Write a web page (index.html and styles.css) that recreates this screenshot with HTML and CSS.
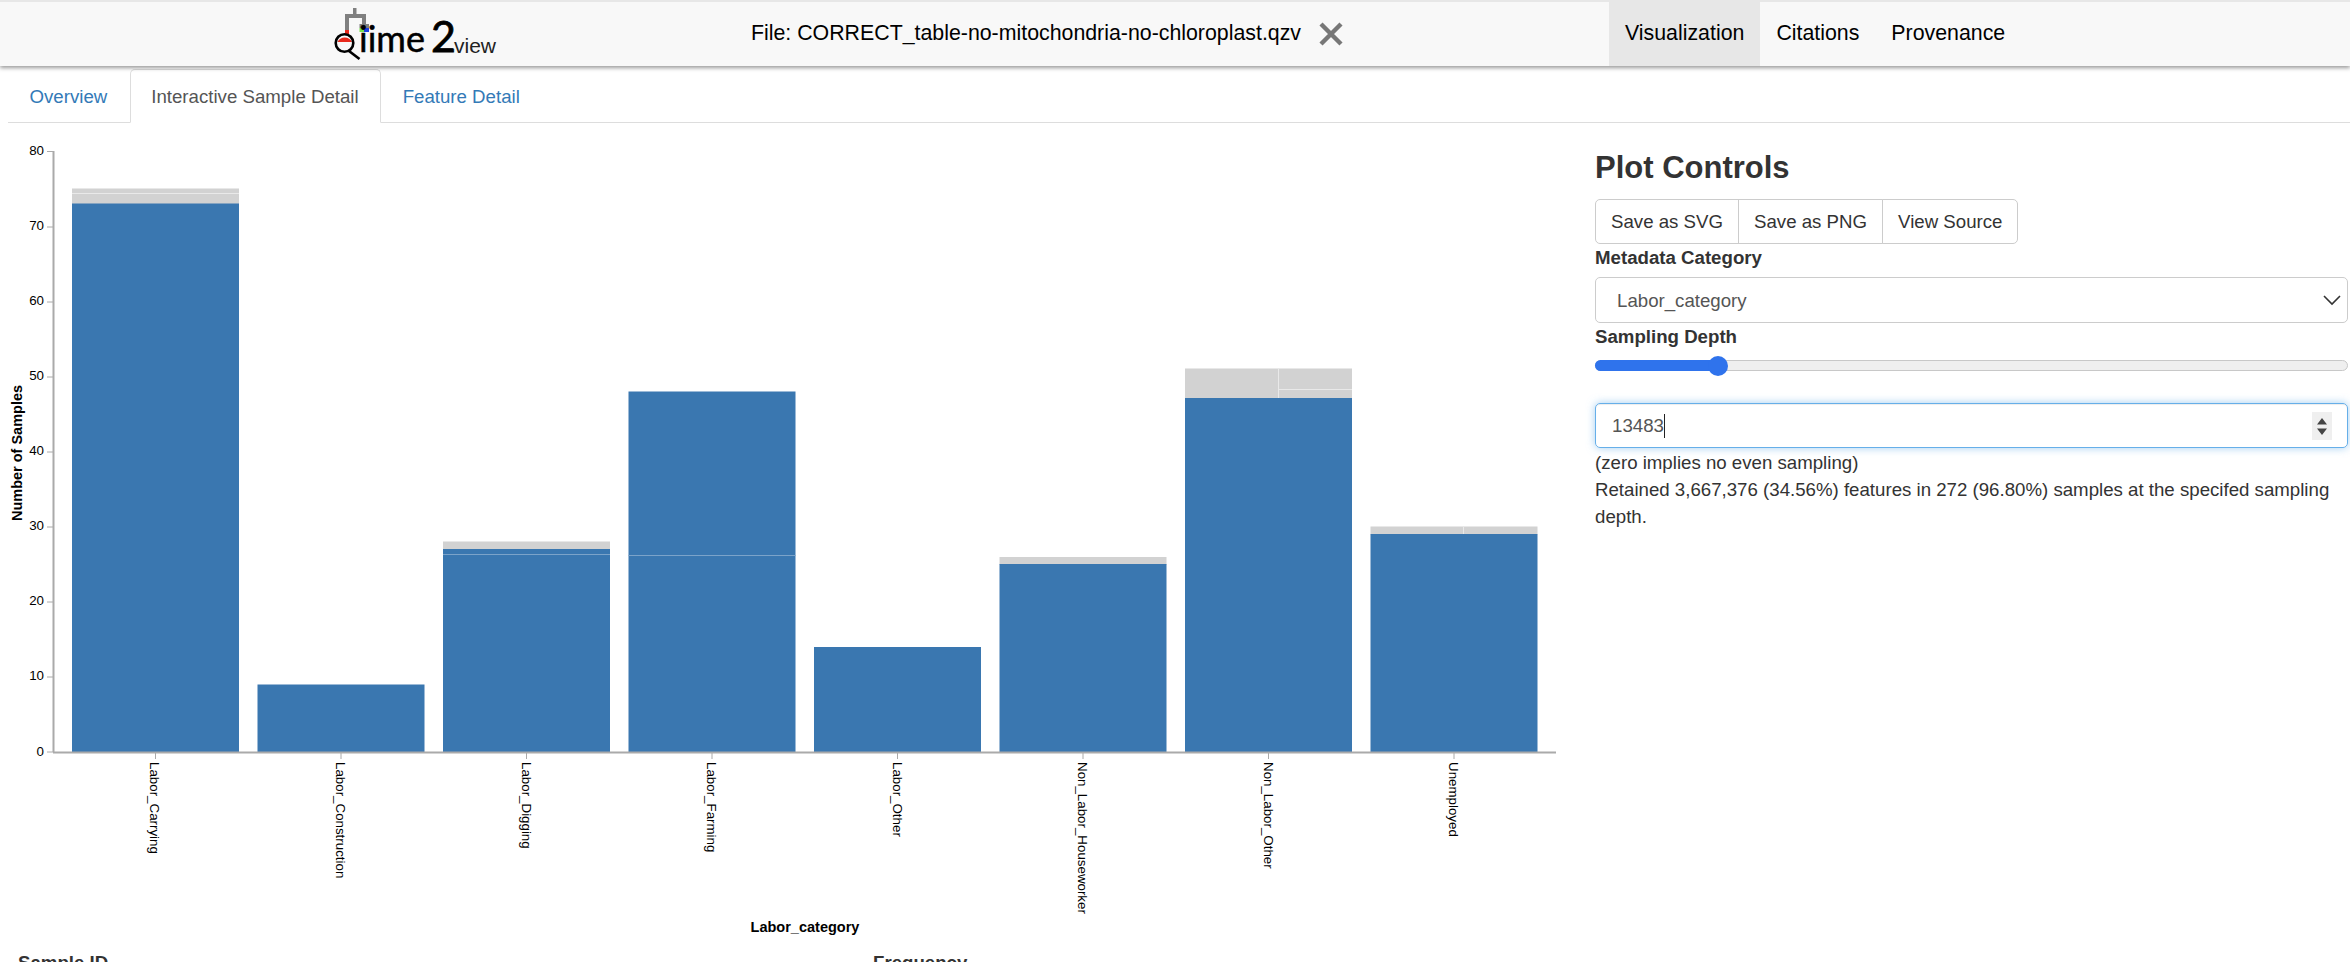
FILE: index.html
```html
<!DOCTYPE html>
<html lang="en">
<head>
    <meta charset="UTF-8">
    <meta name="viewport" content="width=device-width, initial-scale=1.0">
    <title>QIIME 2 View</title>
    <link rel="stylesheet" href="styles.css">
</head>
<body>

    <header class="topbar">
        <svg class="logo" width="190" height="64" viewBox="320 2 190 64" role="img" aria-label="qiime2 view">
            <rect x="353" y="8" width="3.5" height="7" fill="#808080"/>
            <rect x="345" y="14" width="21" height="4" fill="#808080"/>
            <rect x="345" y="14" width="4" height="16" fill="#808080"/>
            <rect x="362" y="14" width="4" height="11" fill="#808080"/>
            <rect x="359.5" y="24" width="9.5" height="4" fill="#808080"/>
            <rect x="345" y="30" width="4" height="4" fill="#e8291c"/>
            <rect x="359.5" y="28" width="4.5" height="4" fill="#76e04c"/>
            <rect x="364" y="28" width="5" height="4" fill="#1c3ee0"/>
            <path d="M337.5 42 a8 8 0 0 1 14.5 0 z" fill="#e8291c"/>
            <circle cx="344.5" cy="43" r="8.8" fill="none" stroke="#000" stroke-width="2.6"/>
            <line x1="349" y1="51" x2="359.5" y2="59" stroke="#000" stroke-width="2.6"/>
            <text class="logo-main" x="359" y="52">iime</text>
            <text class="logo-two" x="431" y="52">2</text>
            <text class="logo-view" x="454" y="53">view</text>
        </svg>
        <div class="file-name">File: CORRECT_table-no-mitochondria-no-chloroplast.qzv</div>
        <svg class="close-icon" width="26" height="24" viewBox="0 0 26 24">
            <path d="M3 2 L23 22 M23 2 L3 22" stroke="#777" stroke-width="4.4" fill="none"/>
        </svg>
        <nav class="main-nav">
            <a class="active">Visualization</a>
            <a>Citations</a>
            <a>Provenance</a>
        </nav>
    </header>

    <ul class="tabs">
        <li><a>Overview</a></li>
        <li class="active"><a>Interactive Sample Detail</a></li>
        <li><a>Feature Detail</a></li>
    </ul>

    <main class="content">
        <section class="plot-column">
            <svg class="chart" width="1590" height="810" viewBox="0 130 1590 810">
                <!-- bars: 7.5125px per sample, zero at y=752 -->
                <g fill="#d2d2d2">
                    <rect x="72" y="188.5" width="167" height="16"/>
                    <rect x="443" y="541.5" width="167" height="10"/>
                    <rect x="999.5" y="557" width="167" height="8"/>
                    <rect x="1185" y="368.5" width="167" height="30"/>
                    <rect x="1370.5" y="526.5" width="167" height="8"/>
                </g>
                <g fill="#3a77b0">
                    <rect x="72" y="203.5" width="167" height="548.5"/>
                    <rect x="257.5" y="684.5" width="167" height="67.5"/>
                    <rect x="443" y="549" width="167" height="203"/>
                    <rect x="628.5" y="391.5" width="167" height="360.5"/>
                    <rect x="814" y="647" width="167" height="105"/>
                    <rect x="999.5" y="564" width="167" height="188"/>
                    <rect x="1185" y="398" width="167" height="354"/>
                    <rect x="1370.5" y="534" width="167" height="218"/>
                </g>
                <g stroke="#e9e9e9" stroke-width="1" fill="none">
                    <path d="M72 193.5 H239"/>
                    <path d="M1278.5 368.5 V398 M1278.5 389.5 H1352"/>
                    <path d="M1463.5 526.5 V534"/>
                </g>
                <g stroke="#7ba3c9" stroke-width="1" fill="none">
                    <path d="M443 554.5 H610"/>
                    <path d="M628.5 555.5 H795.5"/>
                </g>

                <!-- y axis -->
                <g stroke="#aaa" fill="none">
                    <path d="M53.5 151 V752" stroke-width="2"/>
                    <path d="M47 151.5 H54 M47 227 H54 M47 302 H54 M47 377 H54 M47 452 H54 M47 527 H54 M47 602 H54 M47 677 H54 M47 752 H54"/>
                </g>
                <g class="tick-label" text-anchor="end">
                    <text x="44" y="155">80</text>
                    <text x="44" y="230">70</text>
                    <text x="44" y="305">60</text>
                    <text x="44" y="380">50</text>
                    <text x="44" y="455">40</text>
                    <text x="44" y="530">30</text>
                    <text x="44" y="605">20</text>
                    <text x="44" y="680">10</text>
                    <text x="44" y="756">0</text>
                </g>
                <text class="axis-title" text-anchor="middle" transform="translate(22 453) rotate(-90)">Number of Samples</text>

                <!-- x axis -->
                <g stroke="#aaa" fill="none">
                    <path d="M53 752.5 H1556" stroke-width="2"/>
                    <path d="M155.5 752 V759 M341 752 V759 M526.5 752 V759 M712 752 V759 M897.5 752 V759 M1083 752 V759 M1268.5 752 V759 M1454 752 V759"/>
                </g>
                <g class="tick-label">
                    <text transform="translate(150 762) rotate(90)">Labor_Carrying</text>
                    <text transform="translate(336 762) rotate(90)">Labor_Construction</text>
                    <text transform="translate(521.5 762) rotate(90)">Labor_Digging</text>
                    <text transform="translate(707 762) rotate(90)">Labor_Farming</text>
                    <text transform="translate(892.5 762) rotate(90)">Labor_Other</text>
                    <text transform="translate(1078 762) rotate(90)">Non_Labor_Houseworker</text>
                    <text transform="translate(1263.5 762) rotate(90)">Non_Labor_Other</text>
                    <text transform="translate(1449 762) rotate(90)">Unemployed</text>
                </g>
                <text class="axis-title" x="805" y="932" text-anchor="middle">Labor_category</text>
            </svg>
            <div class="sample-head">
                <strong class="sample-id">Sample ID</strong>
                <strong>Frequency</strong>
            </div>
        </section>

        <aside class="controls">
            <h3>Plot Controls</h3>
            <div class="btn-group">
                <button>Save as SVG</button>
                <button>Save as PNG</button>
                <button>View Source</button>
            </div>
            <label>Metadata Category</label>
            <div class="select-box">
                <span>Labor_category</span>
                <svg width="20" height="12" viewBox="0 0 20 12">
                    <path d="M2 2 L10 10 L18 2" stroke="#333" stroke-width="1.6" fill="none"/>
                </svg>
            </div>
            <label>Sampling Depth</label>
            <div class="slider">
                <div class="slider-fill"></div>
                <div class="slider-thumb"></div>
            </div>
            <div class="number-box">
                <span class="number-value">13483</span>
                <span class="stepper">
                    <svg width="12" height="24" viewBox="0 0 12 24">
                        <path d="M6 4 L11 10.5 H1 Z M6 21 L11 14.5 H1 Z" fill="#444"/>
                    </svg>
                </span>
            </div>
            <p class="depth-note">(zero implies no even sampling)</p>
            <p>Retained 3,667,376 (34.56%) features in 272 (96.80%) samples at the specifed sampling depth.</p>
        </aside>
    </main>

</body>
</html>
```

FILE: styles.css
```css
html, body {
    height: 962px;
    overflow: hidden;
}

body {
    font-family: "Liberation Sans", Arial, sans-serif;
    font-size: 18.67px;
    line-height: 27px;
    color: #333;
    background-color: #fff;
    margin: 0;
    padding: 0;
}

.topbar {
    display: flex;
    align-items: center;
    box-sizing: border-box;
    height: 66px;
    padding-left: 320px;
    font-size: 21.33px;
    background-color: #f8f8f8;
    border-top: 2px solid #e7e7e7;
    box-shadow: 0 2px 4px rgba(0, 0, 0, 0.4);
    position: relative;
}

.logo {
    display: block;
    flex: none;
}

.logo-main {
    font-family: Lato, "Liberation Sans", sans-serif;
    font-size: 36px;
    fill: #000;
    stroke: #000;
    stroke-width: 0.5px;
}

.logo-two {
    font-family: Lato, "Liberation Sans", sans-serif;
    font-size: 43px;
    fill: #000;
    stroke: #000;
    stroke-width: 0.8px;
}

.logo-view {
    font-family: "Liberation Sans", sans-serif;
    font-size: 21px;
    fill: #222;
}

.file-name {
    margin-left: 241px;
    margin-bottom: 2px;
    color: #000;
    white-space: nowrap;
}

.close-icon {
    margin-left: 17px;
    flex: none;
}

.main-nav {
    display: flex;
    align-self: stretch;
    margin-left: 265px;
}

.main-nav a {
    display: flex;
    align-items: center;
    padding: 0 16px 2px;
    color: #000;
}

.main-nav a.active {
    background-color: #e7e7e7;
}

.tabs {
    display: flex;
    list-style: none;
    margin: 3px 0 0 8px;
    padding: 0;
    height: 54px;
    box-sizing: border-box;
    border-bottom: 1px solid #ddd;
}

.tabs li a {
    display: block;
    box-sizing: border-box;
    height: 54px;
    padding: 13px 21.5px 13px 20.5px;
    color: #337ab7;
    border: 1px solid transparent;
    border-radius: 5px 5px 0 0;
}

.tabs li.active a {
    color: #555;
    background-color: #fff;
    border-color: #ddd #ddd #fff;
}

.content {
    display: flex;
}

.plot-column {
    flex: none;
    width: 1595px;
    padding-top: 7px;
}

.chart {
    display: block;
}

.tick-label text {
    font-size: 13.33px;
    fill: #000;
}

.axis-title {
    font-size: 14.5px;
    font-weight: 700;
    fill: #000;
}

.sample-head {
    display: flex;
    margin-top: 9px;
    padding-left: 18px;
}

.sample-id {
    width: 855px;
}

.controls {
    flex: none;
    width: 753px;
}

.controls h3 {
    font-size: 31px;
    font-weight: 700;
    line-height: 36px;
    margin: 27px 0 13px;
}

.btn-group {
    display: inline-flex;
    vertical-align: top;
}

.btn-group button {
    font: inherit;
    height: 45px;
    padding: 0 15px;
    color: #333;
    background-color: #fff;
    border: 1px solid #ccc;
    margin-left: -1px;
}

.btn-group button:first-child {
    margin-left: 0;
    border-radius: 5px 0 0 5px;
}

.btn-group button:last-child {
    border-radius: 0 5px 5px 0;
}

.controls label {
    display: block;
    font-weight: 700;
}

.select-box {
    display: flex;
    align-items: center;
    justify-content: space-between;
    box-sizing: border-box;
    height: 46px;
    margin-top: 6px;
    padding: 0 5px 0 21px;
    border: 1px solid #ccc;
    border-radius: 5px;
    color: #555;
}

.slider {
    position: relative;
    height: 11px;
    margin-top: 10px;
    background-color: #efefef;
    border: 1px solid #c8c8c8;
    border-radius: 6px;
    box-sizing: border-box;
}

.slider-fill {
    width: 122px;
    height: 11px;
    margin: -1px;
    background-color: #2f73ec;
    border-radius: 6px 0 0 6px;
}

.slider-thumb {
    position: absolute;
    left: 112px;
    top: -5px;
    width: 20px;
    height: 20px;
    background-color: #2f73ec;
    border-radius: 50%;
}

.number-box {
    display: flex;
    align-items: center;
    justify-content: space-between;
    box-sizing: border-box;
    height: 45px;
    margin-top: 32px;
    padding: 0 16px 0 16px;
    border: 1px solid #66afe9;
    border-radius: 5px;
    color: #555;
    box-shadow: inset 0 1px 1px rgba(0, 0, 0, 0.075), 0 0 8px rgba(102, 175, 233, 0.6);
}

.number-value {
    border-right: 1px solid #222;
    line-height: 24px;
}

.stepper {
    display: flex;
    align-items: center;
    justify-content: center;
    width: 20px;
    height: 28px;
    margin-right: -1px;
    background-color: #efefef;
}

.controls p {
    margin: 0;
}

.controls .depth-note {
    margin-top: 1px;
}
```
